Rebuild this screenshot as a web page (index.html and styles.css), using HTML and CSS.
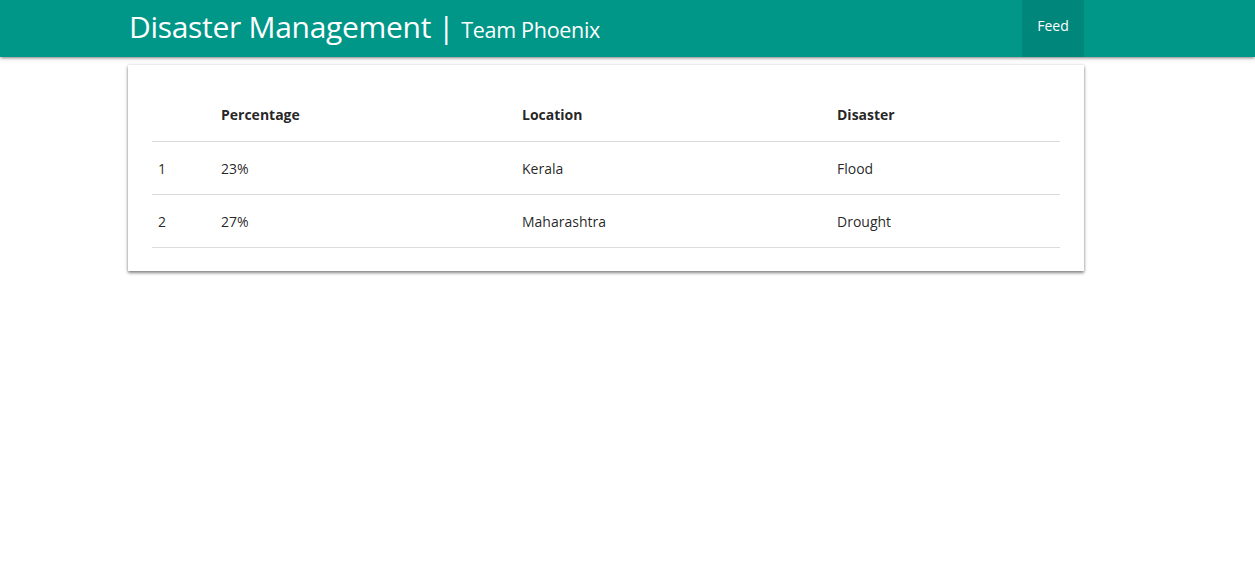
FILE: index.html
```html
<!DOCTYPE html>
<html>
<head>
<meta charset="utf-8">
<link rel="stylesheet" href="styles.css">
</head>
<body>
<nav class="navbar">
  <div class="nav-inner">
    <div class="brand">Disaster Management<span class="pipe">|</span><span class="brand-sub">Team Phoenix</span></div>
    <a class="nav-link" href="#">Feed</a>
  </div>
</nav>
<main class="container">
  <div class="card">
    <table class="data-table">
      <thead>
        <tr>
          <th class="c-idx"></th>
          <th class="c-pct">Percentage</th>
          <th class="c-loc">Location</th>
          <th class="c-dis">Disaster</th>
        </tr>
      </thead>
      <tbody>
        <tr><td>1</td><td>23%</td><td>Kerala</td><td>Flood</td></tr>
        <tr><td>2</td><td>27%</td><td>Maharashtra</td><td>Drought</td></tr>
      </tbody>
    </table>
  </div>
</main>
</body>
</html>
```
FILE: styles.css
```css
* { box-sizing: border-box; }
html, body { margin: 0; padding: 0; background: #fff; }
body {
  min-height: 100vh;
  font-family: "Open Sans", "Noto Sans", "Liberation Sans", sans-serif;
  color: rgba(0,0,0,0.87);
}
.navbar {
  background: #009688;
  height: 57px;
  box-shadow: 0 2px 2px 0 rgba(0,0,0,0.14), 0 3px 1px -2px rgba(0,0,0,0.12), 0 1px 5px 0 rgba(0,0,0,0.2);
}
.nav-inner {
  width: 956px;
  margin-left: 128px;
  height: 57px;
  display: flex;
  justify-content: space-between;
  align-items: stretch;
}
.brand {
  color: #fff;
  font-size: 30px;
  line-height: 54px;
  padding-left: 1px;
  white-space: nowrap;
  letter-spacing: -0.3px;
}
.pipe { margin: 0 7px 0 7px; }
.brand-sub { font-size: 21.5px; letter-spacing: -0.3px; }
.nav-link {
  display: block;
  width: 62px;
  background: rgba(0,0,0,0.1);
  color: #fff;
  text-decoration: none;
  font-size: 14px;
  text-align: center;
  line-height: 52px;
}
.container {
  width: 956px;
  margin: 8px 0 20px 128px;
}
.card {
  background: #fff;
  padding: 23px 24px 23px 24px;
  box-shadow: 0 2px 3px 0 rgba(0,0,0,0.45), 0 0 3px 0 rgba(0,0,0,0.15);
}
.data-table {
  width: 100%;
  border-collapse: collapse;
  font-size: 14px;
}
.data-table th, .data-table td {
  text-align: left;
  padding: 1px 5px 0 5px;
  height: 53px;
  font-weight: normal;
  vertical-align: middle;
}
.data-table th { font-weight: 700; }
.data-table tr { border-bottom: 1px solid #dcdcdc; }
.c-idx { width: 64px; }
.c-pct { width: 301px; }
.c-loc { width: 315px; }
.c-dis { width: 228px; }
.data-table td:first-child { padding-left: 6px; }
```
